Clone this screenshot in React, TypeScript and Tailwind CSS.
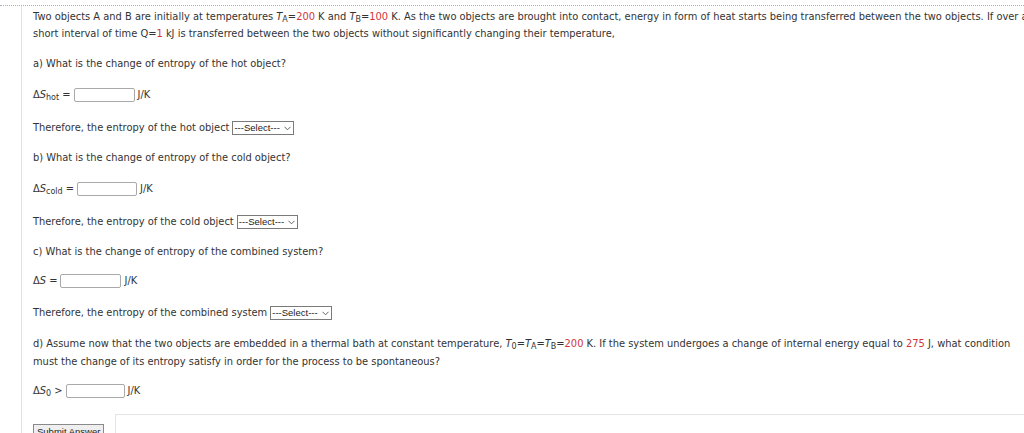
import React from 'react';

const red = 'text-[#d0343a]';

function V({ s, sub }: { s: string; sub?: string }) {
  return (
    <span>
      <i>{s}</i>
      {sub && <sub className="text-[8px] not-italic">{sub}</sub>}
    </span>
  );
}

function Num({ v }: { v: string }) {
  return <span className={red}>{v}</span>;
}

function Box({ w }: { w: string }) {
  return <span className={`inline-block align-middle h-[14px] ${w} border border-[#a9a9a9] rounded-[2px] bg-white`} />;
}

function Select({ label }: { label: string }) {
  return (
    <span className="inline-flex items-center align-middle h-[14px] border border-[#7a7a7a] bg-white pl-[1px] pr-[2px] gap-[4px] font-['Liberation_Sans',Arial,sans-serif] text-[9.5px] text-[#222]">
      {label}
      <svg width="7" height="5" viewBox="0 0 7 5" className="ml-auto">
        <path d="M0.5 0.8 L3.5 3.8 L6.5 0.8" fill="none" stroke="#555" strokeWidth="0.9" />
      </svg>
    </span>
  );
}

export default function App() {
  return (
    <div className="w-[1024px] h-[433px] overflow-hidden bg-white font-['DejaVu_Sans',Verdana,sans-serif] text-[9.9px] text-[#333]">
      <div className="h-[5px]" />
      <div className="border-t border-dotted border-[#9fb1c6]" />
      <div className="ml-[21px] border-l border-[#e2e2e2] pl-[11px] pt-[2px] h-[440px] flex flex-col">
        <div className="leading-[17px] whitespace-nowrap">
          Two objects A and B are initially at temperatures <V s="T" sub="A" />=<Num v="200" /> K and <V s="T" sub="B" />=<Num v="100" /> K. As the two objects are brought into contact, energy in form of heat starts being transferred between the two objects. If over a
          <br />
          short interval of time Q=<Num v="1" /> kJ is transferred between the two objects without significantly changing their temperature,
        </div>

        <div className="mt-[13px] leading-[18px]">a) What is the change of entropy of the hot object?</div>
        <div className="mt-[13px] leading-[18px] flex items-center gap-[3px]">
          <span>Δ<V s="S" sub="hot" /> =</span>
          <Box w="w-[61px]" />
          <span>J/K</span>
        </div>
        <div className="mt-[15px] leading-[18px] flex items-center gap-[3px]">
          <span>Therefore, the entropy of the hot object</span>
          <Select label="---Select---" />
        </div>

        <div className="mt-[12px] leading-[18px]">b) What is the change of entropy of the cold object?</div>
        <div className="mt-[13px] leading-[18px] flex items-center gap-[3px]">
          <span>Δ<V s="S" sub="cold" /> =</span>
          <Box w="w-[60px]" />
          <span>J/K</span>
        </div>
        <div className="mt-[15px] leading-[18px] flex items-center gap-[3px]">
          <span>Therefore, the entropy of the cold object</span>
          <Select label="---Select---" />
        </div>

        <div className="mt-[12px] leading-[18px]">c) What is the change of entropy of the combined system?</div>
        <div className="mt-[11px] leading-[18px] flex items-center gap-[3px]">
          <span>Δ<V s="S" /> =</span>
          <Box w="w-[61px]" />
          <span>J/K</span>
        </div>
        <div className="mt-[14px] leading-[18px] flex items-center gap-[3px]">
          <span>Therefore, the entropy of the combined system</span>
          <Select label="---Select---" />
        </div>

        <div className="mt-[13px] leading-[18px] whitespace-nowrap">
          d) Assume now that the two objects are embedded in a thermal bath at constant temperature, <V s="T" sub="0" />=<V s="T" sub="A" />=<V s="T" sub="B" />=<Num v="200" /> K. If the system undergoes a change of internal energy equal to <Num v="275" /> J, what condition
          <br />
          must the change of its entropy satisfy in order for the process to be spontaneous?
        </div>
        <div className="mt-[11px] leading-[18px] flex items-center gap-[3px]">
          <span>Δ<V s="S" sub="0" /> &gt;</span>
          <Box w="w-[59px]" />
          <span>J/K</span>
        </div>

        <div className="mt-[14px] flex items-start gap-[11px]">
          <button className="mt-[10px] h-[16px] px-[3px] border border-[#8a8a8a] bg-[#efefef] font-['Liberation_Sans',Arial,sans-serif] text-[9.5px] text-[#222] leading-[14px]">
            Submit Answer
          </button>
          <div className="flex-1 h-[30px] border-t border-l border-[#e4e4e4]" />
        </div>
      </div>
    </div>
  );
}
